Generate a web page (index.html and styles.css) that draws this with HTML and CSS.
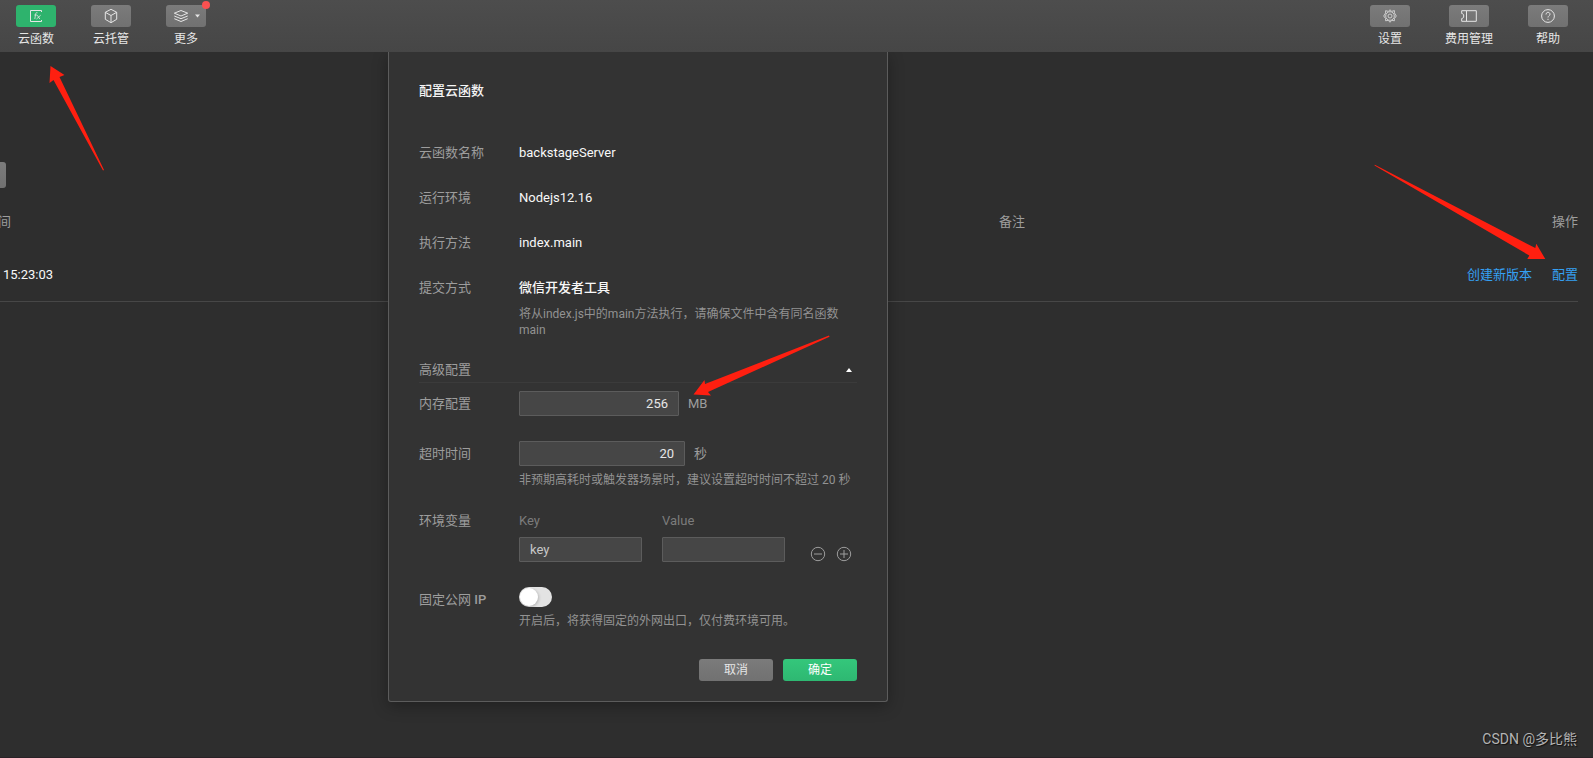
FILE: index.html
```html
<!DOCTYPE html>
<html lang="zh-CN">
<head>
<meta charset="utf-8">
<title>云函数</title>
<link rel="stylesheet" href="styles.css">
</head>
<body>
<header class="topbar">
  <nav class="group">
    <button class="tool active">
      <span class="tile"><svg width="12" height="14" viewBox="0 0 12 14"><path d="M11.500 3V1.500H.5v11h11V11"/><path class="thin" d="M7.500 3.800c-1.200-.6-1.700.2-1.900 1.400L4.800 10M4.300 6h2.700M7.300 6.200l2.500 3.800M10.700 6.200L6.500 10"/></svg></span>
      <span class="name">云函数</span>
    </button>
    <button class="tool">
      <span class="tile"><svg width="14" height="16" viewBox="0 0 14 16"><path d="M7 1.300l5.700 3v7L7 14.700l-5.700-3.400v-7zM1.300 4.300L7 7.500l5.700-3.200M7 7.500v7"/></svg></span>
      <span class="name">云托管</span>
    </button>
    <button class="tool">
      <span class="tile more"><svg width="16" height="14" viewBox="0 0 16 14"><path d="M8 1.500l6.700 2.700L8 7 1.300 4.200zM1.300 7L8 9.700 14.700 7M1.300 9.700L8 12.500l6.700-2.800"/></svg><svg width="5" height="4" viewBox="0 0 5 4"><path class="solid" d="M0 .5h5L2.500 3.500z"/></svg><i class="dot"></i></span>
      <span class="name">更多</span>
    </button>
  </nav>
  <nav class="group wide">
    <button class="tool">
      <span class="tile"><svg class="dim" width="14" height="14" viewBox="0 0 14 14"><path d="M7 .7l1.600 1.700 2.800-.8v2.300L13.300 7l-1.900 2.600v2.200l-2.700-.5L7 13.300l-1.700-2-2.700.5V9.600L.7 7l1.900-3V1.700l2.800.7z"/><circle cx="7" cy="7" r="4.300"/><circle cx="7" cy="7" r="2"/></svg></span>
      <span class="name">设置</span>
    </button>
    <button class="tool">
      <span class="tile"><svg width="16" height="12" viewBox="0 0 16 12"><path d="M.7.7h14.600v10.600H.7V8.500c1.600-.2 2-1 2-2.500s-.4-2.300-2-2.500zM5.500 1v10"/></svg></span>
      <span class="name">费用管理</span>
    </button>
    <button class="tool">
      <span class="tile"><svg width="14" height="14" viewBox="0 0 14 14"><circle cx="7" cy="7" r="6.400"/><path d="M5 5.500c0-3 4-2.800 4-.3C9 6.700 7 6.800 7 8.500M7 9.800v1.200"/></svg></span>
      <span class="name">帮助</span>
    </button>
  </nav>
</header>

<main class="page">
  <button class="edge-button" aria-label="操作按钮"></button>
  <table class="versions">
    <thead><tr><th class="col-time">间</th><th class="col-note">备注</th><th class="col-action">操作</th></tr></thead>
    <tbody><tr><td class="col-time value">15:23:03</td><td class="col-note"></td><td class="col-action"><a href="#">创建新版本</a><a href="#">配置</a></td></tr></tbody>
  </table>

  <form class="dialog">
    <h1>配置云函数</h1>
    <div class="rows">
      <div class="row"><span class="label">云函数名称</span><span class="value">backstageServer</span></div>
      <div class="row"><span class="label">运行环境</span><span class="value">Nodejs12.16</span></div>
      <div class="row"><span class="label">执行方法</span><span class="value">index.main</span></div>
      <div class="row"><span class="label">提交方式</span>
        <div class="field"><span class="value strong">微信开发者工具</span><p class="hint">将从index.js中的main方法执行，请确保文件中含有同名函数 main</p></div>
      </div>
    </div>
    <button type="button" class="advanced"><span>高级配置</span><svg width="6" height="4" viewBox="0 0 6 4"><path class="solid" d="M3 0l3 4H0z"/></svg></button>
    <div class="rows settings">
      <div class="row"><label class="label tall" for="memory">内存配置</label>
        <div class="field measure"><input id="memory" class="number memory" value="256"><span>MB</span></div>
      </div>
      <div class="row"><label class="label tall" for="timeout">超时时间</label>
        <div class="field"><div class="measure"><input id="timeout" class="number timeout" value="20"><span>秒</span></div>
        <p class="hint">非预期高耗时或触发器场景时，建议设置超时时间不超过 20 秒</p></div>
      </div>
      <div class="row variables"><span class="label">环境变量</span>
        <div class="field pairs">
          <div class="pair"><label for="env-key">Key</label><input id="env-key" value="key"></div>
          <div class="pair"><label for="env-value">Value</label><input id="env-value" value=""></div>
          <div class="steps">
            <button type="button" aria-label="删除"><svg width="16" height="16" viewBox="0 0 16 16"><circle cx="8" cy="8" r="6.700"/><path d="M4 8h8"/></svg></button>
            <button type="button" aria-label="添加"><svg width="16" height="16" viewBox="0 0 16 16"><circle cx="8" cy="8" r="6.700"/><path d="M4 8h8M8 4v8"/></svg></button>
          </div>
        </div>
      </div>
      <div class="row"><label class="label tall" for="fixed-ip">固定公网 <b>IP</b></label>
        <div class="field"><input type="checkbox" class="switch" id="fixed-ip"><p class="hint">开启后，将获得固定的外网出口，仅付费环境可用。</p></div>
      </div>
    </div>
    <div class="actions"><button type="button">取消</button><button type="button" class="primary">确定</button></div>
  </form>

  <p class="watermark">CSDN @多比熊</p>
</main>

<svg class="arrow arrow-function" width="56" height="106" viewBox="0 0 56 106"><path d="M1.500 0l14 9-5 2L55 104l-1 .5L4.500 14 .5 17z"/></svg>
<svg class="arrow arrow-memory" width="138" height="62" viewBox="0 0 138 62"><path d="M.5 60.500l11-14.500.5 4L136 1.500l.5 1.200L15 58l3 3.500z"/></svg>
<svg class="arrow arrow-config" width="172" height="96" viewBox="0 0 172 96"><path d="M.8.700L161.300 84l1-4.200 9 15.200h-18l2-3.500L.5 1.500z"/></svg>
</body>
</html>
```
FILE: styles.css
```css
* { box-sizing: border-box; }

body {
  margin: 0;
  min-height: 100vh;
  display: flex;
  flex-direction: column;
  position: relative;
  overflow-x: hidden;
  background: #2e2e2e;
  color: #9d9d9d;
  font: 13px/20px Roboto, "Noto Sans CJK SC", sans-serif;
}

button, input { font: inherit; color: inherit; }
button { border: 0; padding: 0; background: none; }
svg { display: block; fill: none; stroke: currentColor; stroke-width: 1; }
.thin { stroke-width: 0.8; }
.solid { fill: currentColor; stroke: none; }
p, h1 { margin: 0; }

.topbar {
  position: relative;
  z-index: 2;
  height: 52px;
  display: flex;
  justify-content: space-between;
  padding: 5px 25px 0 16px;
  background: linear-gradient(#4d4d4d, #464646);
  color: #e6e6e6;
}
.group { display: flex; gap: 35px; }
.group.wide { gap: 39px; }
.tool {
  width: 40px;
  display: flex;
  flex-direction: column;
  align-items: center;
  gap: 2px;
  font-size: 12px;
}
.tile {
  position: relative;
  width: 40px;
  height: 22px;
  display: flex;
  align-items: center;
  justify-content: center;
  border-radius: 3px;
  background: linear-gradient(#7b7b7b, #717171);
}
.active .tile { background: #2eb36d; }
.more { gap: 6px; }
.dim { opacity: 0.8; }
.name { white-space: nowrap; }
.dot {
  position: absolute;
  top: -4px;
  right: -4px;
  width: 8px;
  height: 8px;
  border-radius: 50%;
  background: #fa5151;
}

.page {
  flex: 1;
  position: relative;
  display: flex;
  flex-direction: column;
  border-bottom: 1px solid #2a2227;
}
.edge-button {
  width: 6px;
  height: 26px;
  margin: 110px 0 14px;
  border-radius: 0 3px 3px 0;
  background: linear-gradient(#7b7b7b, #717171);
}
.versions {
  margin-right: 15px;
  border-collapse: collapse;
  table-layout: fixed;
}
.versions th { height: 40px; padding: 0; font-weight: 400; text-align: left; }
.versions td { height: 59px; padding: 8px 0 0; border-bottom: 1px solid #474747; }
.versions .col-time { width: 999px; }
.versions th.col-time { text-indent: -2px; }
.versions td.col-time { padding-left: 3px; }
.versions .col-action { text-align: right; }
.versions a { margin-left: 20px; color: #35a0f3; text-decoration: none; }

.value { color: #f8f8f8; }
.strong { font-weight: 500; }

.dialog {
  position: absolute;
  top: 0;
  left: 388px;
  width: 500px;
  padding: 29px 30px 20px;
  border: 1px solid #5c5c5c;
  border-top: 0;
  border-radius: 0 0 3px 3px;
  background: #333;
  box-shadow: 0 4px 16px rgba(0, 0, 0, 0.3);
}
.dialog h1 {
  margin-bottom: 42px;
  color: #f5f5f5;
  font-size: 13px;
  line-height: 20px;
  font-weight: 500;
}
.rows { display: flex; flex-direction: column; gap: 25px; }
.row { display: flex; }
.label { flex: 0 0 100px; }
.label b { font-weight: 500; }
.tall { line-height: 25px; }
.field { flex: 1; }
.field > .value { display: block; }
.hint { margin-top: 8px; font-size: 12px; line-height: 16px; color: #929292; }
.settings .hint { margin-top: 6px; }

.advanced {
  width: 100%;
  display: flex;
  align-items: center;
  justify-content: space-between;
  margin: 22px 0 8px;
  padding: 0 5px 2px 0;
  border-bottom: 1px solid #3b3b3b;
}
.advanced svg { color: #fff; }

.dialog input:not(.switch) {
  height: 25px;
  padding: 0 10px;
  border: 1px solid #5c5c5c;
  border-radius: 1px;
  background: #464646;
  color: #c8c8c8;
  font-size: 13px;
}
.measure { display: flex; align-items: center; gap: 9px; }
.dialog input.number { text-align: right; color: #e6e6e6; }
.memory { width: 160px; }
.timeout { width: 166px; }

.variables { line-height: 16px; }
.pairs { display: flex; }
.pair {
  width: 123px;
  margin-right: 20px;
  display: flex;
  flex-direction: column;
  gap: 8px;
  color: #7c7c7c;
}
.steps { flex: 1; display: flex; align-items: flex-end; justify-content: flex-end; gap: 10px; padding-right: 5px; }

.switch {
  appearance: none;
  display: block;
  width: 33px;
  height: 20px;
  margin: 0;
  padding: 1px;
  border-radius: 10px;
  background: #e3e3e3;
}
.switch::before {
  content: "";
  display: block;
  width: 18px;
  height: 18px;
  border-radius: 50%;
  background: #fff;
  box-shadow: 1px 1px 3px rgba(0, 0, 0, 0.2);
}

.actions { display: flex; justify-content: flex-end; gap: 10px; margin-top: 30px; }
.actions button {
  width: 74px;
  height: 22px;
  border-radius: 3px;
  background: linear-gradient(#7b7b7b, #717171);
  color: #e6e6e6;
  font-size: 12px;
}
.actions .primary { background: linear-gradient(#34c77b, #2eb872); color: #fff; }

.watermark {
  position: absolute;
  right: 16px;
  bottom: 8px;
  color: #b4b4b4;
  font-size: 14px;
  text-shadow: 1px 1px 1px #111;
}

.arrow { position: absolute; z-index: 3; fill: #ff1f10; stroke: none; }
.arrow-function { left: 49px; top: 66px; }
.arrow-memory { left: 693px; top: 334px; }
.arrow-config { right: 47px; top: 164px; }
```
